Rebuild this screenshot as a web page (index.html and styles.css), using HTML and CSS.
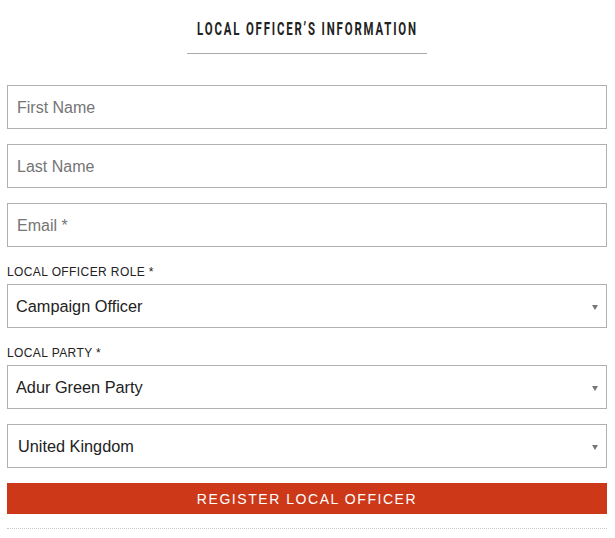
FILE: index.html
```html
<!DOCTYPE html>
<html>
<head>
<meta charset="utf-8">
<link rel="stylesheet" href="styles.css">
</head>
<body>
<form class="form">
  <h2 class="title"><span class="title-text">LOCAL OFFICER’S INFORMATION</span></h2>
  <div class="rule"></div>
  <div class="fields">
    <input class="field" type="text" placeholder="First Name">
    <input class="field" type="text" placeholder="Last Name">
    <input class="field" type="email" placeholder="Email *">
    <label class="label">LOCAL OFFICER ROLE *</label>
    <div class="select"><span class="select-text">Campaign Officer</span><span class="arrow"></span></div>
    <label class="label">LOCAL PARTY *</label>
    <div class="select"><span class="select-text">Adur Green Party</span><span class="arrow"></span></div>
    <div class="select"><span class="select-text country">United Kingdom</span><span class="arrow"></span></div>
    <button class="submit" type="button">REGISTER LOCAL OFFICER</button>
    <div class="dots"></div>
  </div>
</form>
</body>
</html>
```
FILE: styles.css
```css
html, body {
  margin: 0;
  padding: 0;
  background: #fff;
}
.form {
  width: 600px;
  margin-left: 7px;
  font-family: "Liberation Sans", Arial, sans-serif;
}
.title {
  margin: 0;
  padding-top: 18px;
  font-family: Roboto, "Liberation Sans", sans-serif;
  font-weight: bold;
  font-size: 18.5px;
  line-height: 22px;
  text-align: center;
  color: #222;
}
.title-text {
  display: inline-block;
  letter-spacing: 3px;
  transform: scaleX(0.615);
  white-space: nowrap;
}
.rule {
  width: 240px;
  height: 1px;
  background: #aaa;
  margin: 13px auto 0;
}
.fields {
  display: flex;
  flex-direction: column;
  margin-top: 31px;
}
.field {
  box-sizing: border-box;
  height: 44px;
  width: 100%;
  margin: 0 0 15px;
  padding: 1px 9px 0;
  border: 1px solid #b0b0b0;
  border-radius: 0;
  font-family: inherit;
  font-size: 16px;
  color: #333;
  outline: none;
}
.field::placeholder {
  color: #757575;
}
.label {
  margin: 2px 0 4px;
  font-size: 12px;
  line-height: 16px;
  letter-spacing: 0.4px;
  color: #222;
}
.select {
  box-sizing: border-box;
  height: 44px;
  display: flex;
  align-items: center;
  justify-content: space-between;
  padding: 1px 8px 0 8px;
  border: 1px solid #b0b0b0;
  margin-bottom: 15px;
  font-size: 16.3px;
  color: #222;
}
.country {
  padding-left: 2px;
}
.arrow {
  width: 0;
  height: 0;
  border-left: 3px solid transparent;
  border-right: 3px solid transparent;
  border-top: 5px solid #777;
  margin-top: 1px;
}
.submit {
  height: 31px;
  width: 100%;
  border: 0;
  padding: 0;
  margin: 0 0 14px;
  background: #cd3918;
  color: #fff;
  font-family: inherit;
  font-size: 14px;
  letter-spacing: 1.55px;
}
.dots {
  border-top: 1px dotted #c8c8c8;
  height: 0;
}
```
